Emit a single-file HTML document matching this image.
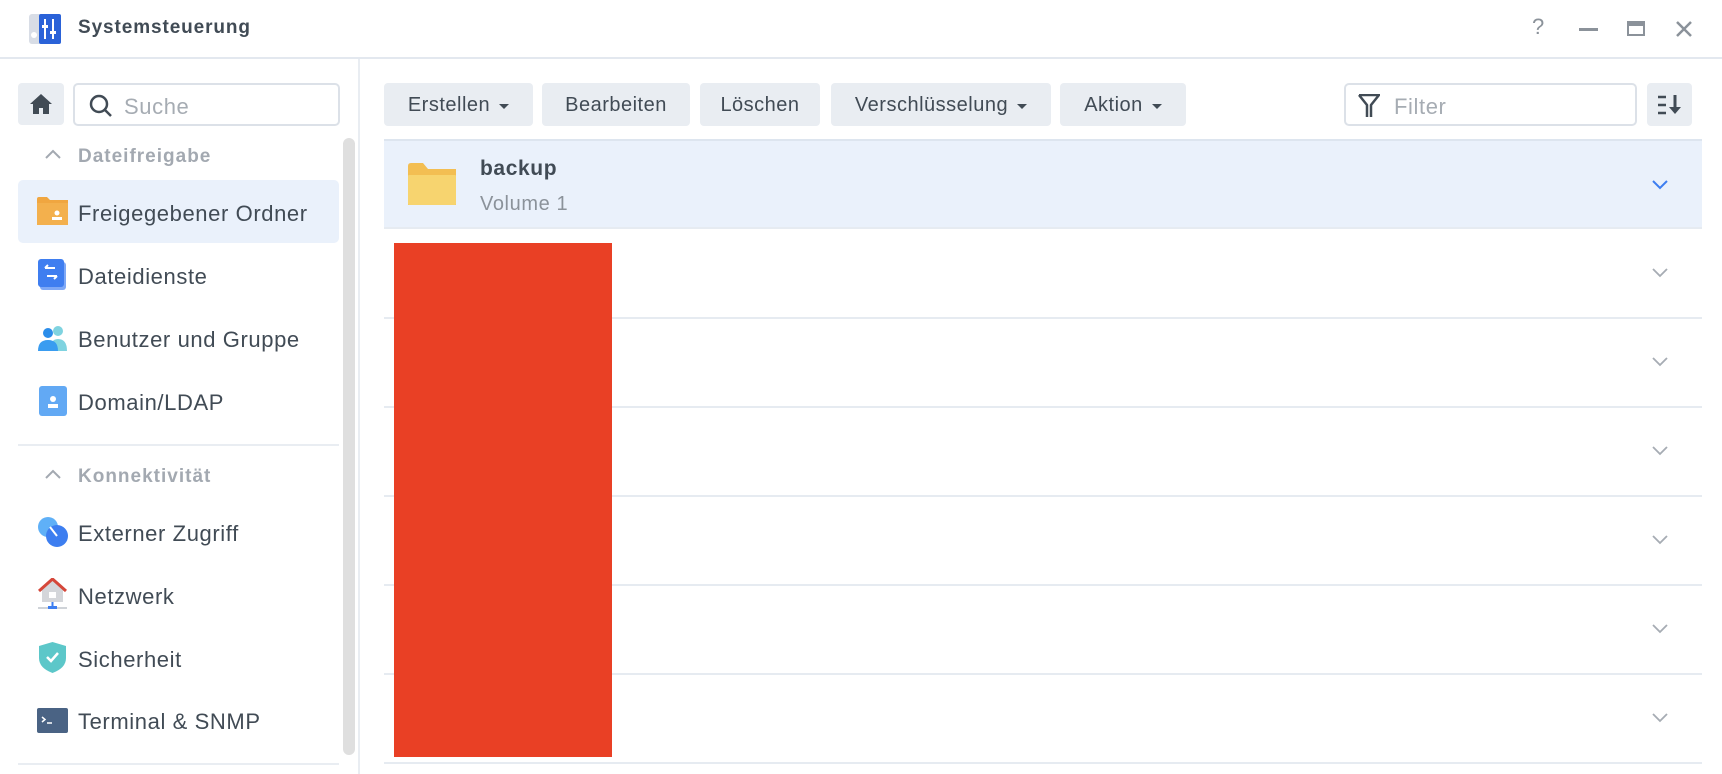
<!DOCTYPE html>
<html><head><meta charset="utf-8"><style>
*{box-sizing:border-box;margin:0;padding:0}
body{width:1722px;height:774px;background:#fff;font-family:"Liberation Sans",sans-serif;color:#414b55;position:relative;overflow:hidden}
.a{position:absolute}
.title{left:78px;top:17px;font-weight:bold;font-size:19px;letter-spacing:0.9px;color:#414b55}
.hdr{position:absolute;left:0;top:57px;width:1722px;height:2px;background:#e3e8ef}
.vdiv{left:358px;top:59px;width:2px;height:715px;background:#e9edf2}
.btn{position:absolute;top:83px;height:43px;background:#e9edf2;border-radius:4px;font-size:20px;letter-spacing:0.5px;color:#414b55;display:flex;align-items:center;justify-content:center;padding-top:2px}
.car{display:inline-block;width:0;height:0;border-left:5px solid transparent;border-right:5px solid transparent;border-top:5px solid #414b55;margin-left:9px;margin-top:2px}
.item{position:absolute;left:78px;font-size:22px;letter-spacing:0.6px;color:#414b55}
.sec{position:absolute;left:78px;font-size:19px;letter-spacing:1px;font-weight:bold;color:#a3a9b1}
.row{position:absolute;left:384px;width:1318px;height:2px;background:#e6ebf1}
.chev{position:absolute;left:1651px;width:18px;height:14px}
</style></head><body>
<svg class="a" style="left:28px;top:13px" width="34" height="32" viewBox="0 0 34 32"><rect x="1" y="1" width="32" height="30" rx="3" fill="#d8dde6"/><rect x="11" y="1" width="22" height="30" rx="2" fill="#2a62d8"/><circle cx="6" cy="22" r="3" fill="#fff"/><rect x="16" y="6" width="2" height="20" fill="#fff"/><rect x="24" y="6" width="2" height="20" fill="#fff"/><rect x="14" y="12" width="6" height="3" fill="#fff"/><rect x="22" y="18" width="6" height="3" fill="#fff"/></svg>
<div class="a title">Systemsteuerung</div>
<div class="a" style="left:1532px;top:14px;font-size:22px;color:#8b929a">?</div>
<div class="a" style="left:1579px;top:28px;width:19px;height:3px;background:#8b929a"></div>
<div class="a" style="left:1627px;top:21px;width:18px;height:15px;border:2px solid #8b929a;border-top-width:5px"></div>
<svg class="a" style="left:1675px;top:20px" width="18" height="18"><path d="M2 2L16 16M16 2L2 16" stroke="#8b929a" stroke-width="2.5"/></svg>
<div class="hdr"></div>
<div class="a vdiv"></div>
<div class="a" style="left:18px;top:83px;width:46px;height:42px;background:#e9edf2;border-radius:4px"></div>
<svg class="a" style="left:29px;top:93px" width="24" height="22"><path d="M12 1L1 11H4V21H10V15H14V21H20V11H23Z" fill="#414b55"/></svg>
<div class="a" style="left:73px;top:83px;width:267px;height:43px;border:2px solid #dce1e8;border-radius:5px"></div>
<svg class="a" style="left:88px;top:93px" width="26" height="26"><circle cx="11" cy="11" r="8" fill="none" stroke="#414b55" stroke-width="2.5"/><path d="M17 17L23 23" stroke="#414b55" stroke-width="2.5"/></svg>
<div class="a" style="left:124px;top:94px;font-size:22px;letter-spacing:0.6px;color:#a6acb3">Suche</div>
<div class="a" style="left:343px;top:138px;width:12px;height:617px;background:#dfdfdf;border-radius:6px"></div>
<svg class="a" style="left:44px;top:148px" width="18" height="12"><path d="M2 10L9 3L16 10" stroke="#a3a9b1" stroke-width="2" fill="none"/></svg>
<div class="sec" style="top:146px">Dateifreigabe</div>
<div class="a" style="left:18px;top:180px;width:321px;height:63px;background:#eaf1fb;border-radius:5px"></div>
<svg class="a" style="left:37px;top:197px" width="31" height="28"><path d="M0 2Q0 0 2 0H10L13 3H31V28H0Z" fill="#f0a640"/><rect x="0" y="6" width="31" height="22" fill="#f3b04d"/><circle cx="20" cy="16" r="2.5" fill="#fff"/><rect x="15" y="20" width="10" height="3" fill="#fff"/></svg>
<div class="item" style="top:201px">Freigegebener Ordner</div>
<svg class="a" style="left:38px;top:259px" width="29" height="31"><rect x="2" y="3" width="26" height="28" rx="3" fill="#7ea8f6"/><rect x="0" y="0" width="26" height="28" rx="3" fill="#3f7ef0"/><path d="M7 9H17M7 9L10 6M19 17H9M19 17L16 20" stroke="#fff" stroke-width="2" fill="none"/></svg>
<div class="item" style="top:264px">Dateidienste</div>
<svg class="a" style="left:37px;top:324px" width="32" height="28"><circle cx="21" cy="7" r="5" fill="#7fd3e0"/><path d="M13 27Q13 15 21 15Q30 15 30 27Z" fill="#7fd3e0"/><circle cx="11" cy="9" r="5" fill="#2b8dea"/><path d="M1 27Q1 16 11 16Q21 16 21 27Z" fill="#3a9cf0"/></svg>
<div class="item" style="top:327px">Benutzer und Gruppe</div>
<svg class="a" style="left:39px;top:386px" width="28" height="30"><rect x="0" y="0" width="28" height="30" rx="3" fill="#62a9f4"/><circle cx="14" cy="13" r="3" fill="#fff"/><rect x="9" y="18" width="10" height="4" fill="#fff"/></svg>
<div class="item" style="top:390px">Domain/LDAP</div>
<div class="a" style="left:18px;top:444px;width:321px;height:2px;background:#e9edf2"></div>
<svg class="a" style="left:44px;top:468px" width="18" height="12"><path d="M2 10L9 3L16 10" stroke="#a3a9b1" stroke-width="2" fill="none"/></svg>
<div class="sec" style="top:466px">Konnektivität</div>
<svg class="a" style="left:37px;top:516px" width="32" height="32"><circle cx="11" cy="11" r="10" fill="#5fb0f7"/><circle cx="20" cy="20" r="11" fill="#3d7ef0"/><path d="M13 11L20 20" stroke="#fff" stroke-width="2"/></svg>
<div class="item" style="top:521px">Externer Zugriff</div>
<svg class="a" style="left:38px;top:578px" width="29" height="32"><path d="M14.5 1L1 13H4V24H25V13H28Z" fill="#d4d6da"/><path d="M1 13L14.5 1L28 13" stroke="#d5473a" stroke-width="3" fill="none"/><rect x="11" y="14" width="7" height="6" fill="#fff"/><rect x="0" y="29" width="29" height="2" fill="#cfd3d8"/><rect x="10" y="28" width="9" height="3" fill="#3d7ef0"/><rect x="13.5" y="24" width="2" height="5" fill="#3d7ef0"/></svg>
<div class="item" style="top:584px">Netzwerk</div>
<svg class="a" style="left:39px;top:642px" width="27" height="31"><path d="M13.5 0L27 4V16Q27 26 13.5 31Q0 26 0 16V4Z" fill="#5cc7c9"/><path d="M8 15L12 19L19 11" stroke="#fff" stroke-width="2.5" fill="none"/></svg>
<div class="item" style="top:647px">Sicherheit</div>
<svg class="a" style="left:37px;top:708px" width="31" height="25"><rect width="31" height="25" rx="2" fill="#4a6384"/><path d="M5 9L8 11.5L5 14M10 15H15" stroke="#fff" stroke-width="1.5" fill="none"/></svg>
<div class="item" style="top:709px">Terminal &amp; SNMP</div>
<div class="a" style="left:18px;top:763px;width:321px;height:2px;background:#e9edf2"></div>
<div class="btn" style="left:384px;width:149px">Erstellen<span class="car"></span></div>
<div class="btn" style="left:542px;width:148px">Bearbeiten</div>
<div class="btn" style="left:700px;width:120px">Löschen</div>
<div class="btn" style="left:831px;width:220px">Verschlüsselung<span class="car"></span></div>
<div class="btn" style="left:1060px;width:126px">Aktion<span class="car"></span></div>
<div class="a" style="left:1344px;top:83px;width:293px;height:43px;border:2px solid #dce1e8;border-radius:5px"></div>
<svg class="a" style="left:1358px;top:94px" width="22" height="24"><path d="M1 1H21L13 11V23M1 1L9 11V23" stroke="#414b55" stroke-width="2.5" fill="none" stroke-linejoin="round"/></svg>
<div class="a" style="left:1394px;top:94px;font-size:22px;letter-spacing:0.6px;color:#a6acb3">Filter</div>
<div class="a" style="left:1647px;top:83px;width:45px;height:43px;background:#e9edf2;border-radius:4px"></div>
<svg class="a" style="left:1657px;top:94px" width="26" height="22"><path d="M1 3H9M1 11H9M1 19H9" stroke="#414b55" stroke-width="2.5"/><path d="M18 1V18" stroke="#414b55" stroke-width="3"/><path d="M12 13L18 20L24 13Z" fill="#414b55"/></svg>
<div class="a" style="left:384px;top:139px;width:1318px;height:89px;background:#eaf1fb;border-top:2px solid #dde5ef"></div>
<svg class="a" style="left:408px;top:163px" width="48" height="42"><path d="M0 3Q0 0 3 0H15L20 6H48V42H0Z" fill="#f3be52"/><rect x="0" y="12" width="48" height="30" rx="1" fill="#f7d46f"/></svg>
<div class="a" style="left:480px;top:157px;font-size:21px;letter-spacing:0.6px;font-weight:bold;color:#414b55">backup</div>
<div class="a" style="left:480px;top:193px;font-size:20px;letter-spacing:0.6px;color:#8b929a">Volume 1</div>
<svg class="chev" style="top:177px"><path d="M2 4L9 11L16 4" stroke="#3d7ef0" stroke-width="2" fill="none"/></svg>
<div class="row" style="top:227px"></div>
<div class="row" style="top:317px"></div>
<div class="row" style="top:406px"></div>
<div class="row" style="top:495px"></div>
<div class="row" style="top:584px"></div>
<div class="row" style="top:673px"></div>
<div class="row" style="top:762px"></div>
<svg class="chev" style="top:265px"><path d="M2 4L9 11L16 4" stroke="#a6acb3" stroke-width="1.8" fill="none"/></svg>
<svg class="chev" style="top:354px"><path d="M2 4L9 11L16 4" stroke="#a6acb3" stroke-width="1.8" fill="none"/></svg>
<svg class="chev" style="top:443px"><path d="M2 4L9 11L16 4" stroke="#a6acb3" stroke-width="1.8" fill="none"/></svg>
<svg class="chev" style="top:532px"><path d="M2 4L9 11L16 4" stroke="#a6acb3" stroke-width="1.8" fill="none"/></svg>
<svg class="chev" style="top:621px"><path d="M2 4L9 11L16 4" stroke="#a6acb3" stroke-width="1.8" fill="none"/></svg>
<svg class="chev" style="top:710px"><path d="M2 4L9 11L16 4" stroke="#a6acb3" stroke-width="1.8" fill="none"/></svg>
<div class="a" style="left:394px;top:243px;width:218px;height:514px;background:#e94025"></div>
</body></html>
